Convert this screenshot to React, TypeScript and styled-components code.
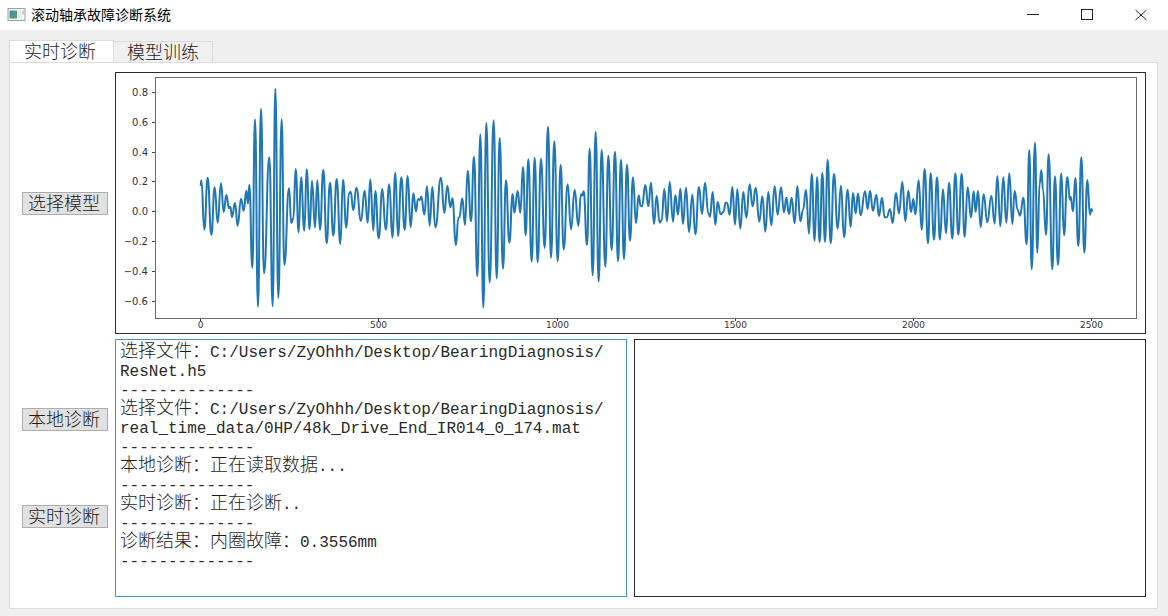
import React, { useState } from "react";
import styled, { createGlobalStyle } from "styled-components";

const GlobalStyle = createGlobalStyle`
  * { box-sizing: border-box; }
  body {
    margin: 0;
    background: #efefef;
    color: #1c1c1c;
    font-family: "Noto Sans CJK SC", sans-serif;
  }
`;

const Window = styled.div`
  display: flex;
  flex-direction: column;
  min-height: 100vh;
`;

const TitleBar = styled.header`
  display: flex;
  align-items: center;
  height: 30px;
  padding-left: 7px;
  background: #ffffff;
`;

const Title = styled.h1`
  flex: 1;
  margin: 0 0 0 5px;
  padding-bottom: 2px;
  font-size: 14px;
  line-height: 20px;
  font-weight: 400;
  color: #000000;
`;

const CaptionButton = styled.button`
  display: flex;
  align-items: center;
  justify-content: center;
  width: 54px;
  height: 30px;
  padding: 0;
  border: 0;
  background: transparent;
  color: #222222;
`;

const Main = styled.main`
  flex: 1;
  display: flex;
  flex-direction: column;
  padding: 10px 10px 7px 9px;
`;

const TabList = styled.div`
  display: flex;
  align-items: flex-end;
`;

const Tab = styled.button<{ $active: boolean }>`
  height: ${(p) => (p.$active ? 23 : 21)}px;
  margin-bottom: ${(p) => (p.$active ? -1 : 0)}px;
  padding: 0 ${(p) => (p.$active ? 17 : 13)}px ${(p) => (p.$active ? 4 : 3)}px ${(p) => (p.$active ? 14 : 13)}px;
  border: 1px solid #dcdcdc;
  border-left-width: ${(p) => (p.$active ? 1 : 0)}px;
  border-bottom: 0;
  background: ${(p) => (p.$active ? "#ffffff" : "#f0f0f0")};
  color: #1c1c1c;
  font-family: inherit;
  font-size: 18px;
  font-weight: 300;
  line-height: 18px;
`;

const Panel = styled.section`
  flex: 1;
  display: grid;
  grid-template-columns: 86px minmax(0, 1fr);
  grid-template-rows: minmax(0, 262fr) minmax(258px, 258fr);
  gap: 5px 7px;
  padding: 9px 11px 11px 12px;
  border: 1px solid #dcdcdc;
  background: #ffffff;
`;

const ButtonColumn = styled.div`
  display: flex;
  flex-direction: column;
  justify-content: center;
  gap: 74px;
`;

const ActionButton = styled.button`
  height: 23px;
  padding: 0 2px 3px 0;
  border: 1px solid #adadad;
  background: #e1e1e1;
  color: #1c1c1c;
  font-family: inherit;
  font-size: 18px;
  font-weight: 300;
  line-height: 18px;
`;

const ChartFrame = styled.figure`
  display: flex;
  min-height: 0;
  margin: 0;
  border: 1px solid #2b2b2b;
`;

const ChartSvg = styled.svg`
  display: block;
  width: 100%;
  height: 100%;
`;

const TickText = styled.text<{ $size: number }>`
  font-family: "DejaVu Sans", sans-serif;
  font-size: ${(p) => p.$size}px;
  fill: #333333;
`;

const OutputRow = styled.div`
  display: grid;
  grid-template-columns: minmax(0, 1fr) minmax(0, 1fr);
  gap: 7px;
`;

const OutputBox = styled.div<{ $focused?: boolean }>`
  padding: 4px;
  border: 1px solid ${(p) => (p.$focused ? "#3a96dd" : "#2b2b2b")};
  background: #ffffff;
`;

const LogLine = styled.p`
  margin: 0;
  height: 19px;
  color: #2a2a2a;
  font-family: "Liberation Mono", monospace;
  font-size: 16px;
  line-height: 19px;
  white-space: nowrap;
`;

const Han = styled.span`
  color: #1c1c1c;
  font-family: "Noto Sans CJK SC", sans-serif;
  font-size: 18px;
  font-weight: 300;
  line-height: 0;
`;

type Segment = { start: number; points: number[] };

/* Turning points of the vibration signal as x, y pairs, three units to a pixel. */
const SIGNAL: Segment[] = [
  {
    start: -15,
    points: [
      272, 345, 274, 331, 283, 479, 293, 323, 304, 495, 314, 352, 323, 458, 333, 340, 341, 426, 349, 375,
      357, 415, 361, 410, 366, 441, 375, 399, 383, 467, 393, 386, 401, 422, 409, 362, 414, 400, 418, 344,
      427, 594, 435, 148, 444, 710, 453, 116, 462, 610, 478, 262, 488, 709, 496, 56, 505, 684, 515, 148,
      523, 585, 537, 355, 544, 460, 550, 445, 557, 297, 566, 487, 573, 322, 583, 482, 590, 298, 599, 478,
      606, 332, 615, 473, 622, 331, 630, 480, 640, 299, 650, 520, 660, 338, 670, 497, 680, 327, 691, 522,
      699, 329, 709, 473, 717, 370, 722, 365, 730, 421, 739, 353, 753, 452, 764, 362, 773, 458,
    ],
  },
  {
    start: 735,
    points: [
      31, 328, 40, 482, 46, 363, 56, 505, 67, 357, 77, 479, 88, 343, 97, 503, 106, 308, 114, 498,
      124, 322, 134, 480, 143, 318, 152, 472, 160, 370, 168, 424, 174, 387, 180, 390, 184, 380, 193, 434,
      201, 349, 209, 467, 217, 351, 226, 472, 243, 323, 253, 429, 262, 347, 271, 412, 277, 385, 288, 525,
      295, 443, 298, 442, 307, 385, 315, 465, 323, 302, 333, 454, 342, 260, 352, 619, 361, 193, 370, 713,
      379, 159, 389, 638, 401, 151, 410, 625, 419, 204, 429, 596, 438, 331, 448, 518, 458, 372, 463, 428,
      473, 363, 481, 428, 489, 291, 497, 496, 505, 268, 515, 575, 524, 264, 533, 577, 543, 266, 554, 534,
      564, 170, 573, 563, 583, 214, 593, 574, 602, 284, 611, 538, 623, 343, 633, 478, 644, 360, 655, 467,
      663, 373, 667, 376, 671, 364, 681, 525, 689, 236, 698, 616, 707, 185, 716, 635, 725, 240, 736, 590,
      745, 257, 755, 540, 765, 245,
    ],
  },
  {
    start: 1485,
    points: [
      24, 574, 33, 269, 42, 567, 51, 284, 60, 513, 69, 322, 78, 459, 86, 376, 92, 408, 96, 409,
      106, 345, 115, 409, 123, 338, 132, 462, 140, 377, 149, 458, 155, 450, 163, 357, 171, 454, 179, 336,
      189, 455, 196, 375, 204, 434, 211, 356, 219, 462, 228, 353, 237, 486, 247, 374, 256, 493, 267, 351,
      276, 432, 285, 339, 295, 430, 300, 440, 308, 366, 316, 464, 323, 396, 332, 433, 341, 425, 347, 398,
      351, 398, 359, 434, 367, 351, 375, 464, 382, 358, 391, 476, 400, 366, 409, 443, 419, 343, 428, 409,
      437, 353, 448, 455, 457, 379, 466, 485, 475, 366, 484, 466, 494, 349, 503, 434, 513, 352, 522, 427,
      529, 383, 537, 432, 545, 383, 554, 460, 562, 349, 571, 454, 579, 420, 588, 360, 597, 491, 605, 311,
      614, 513, 621, 321, 629, 516, 637, 309, 645, 516, 653, 269, 662, 520, 672, 312, 683, 476, 693, 347,
      702, 502, 713, 359, 722, 471, 729, 369, 737, 430, 744, 370, 752, 436, 765, 364, 773, 417,
    ],
  },
  {
    start: 2235,
    points: [
      30, 363, 39, 422, 49, 375, 57, 438, 66, 383, 74, 442, 80, 442, 90, 418, 98, 459, 108, 369,
      117, 430, 127, 336, 136, 453, 145, 362, 153, 426, 160, 387, 166, 433, 176, 331, 185, 479, 194, 297,
      204, 520, 212, 310, 222, 509, 231, 322, 240, 509, 249, 358, 258, 490, 267, 338, 277, 506, 286, 310,
      295, 494, 305, 311, 314, 501, 323, 352, 333, 442, 341, 364, 347, 426, 354, 363, 362, 471, 371, 373,
      382, 457, 394, 377, 404, 461, 412, 318, 421, 469, 430, 322, 439, 458, 448, 310, 457, 462, 464, 363,
      473, 420, 480, 437, 490, 383, 500, 523, 508, 240, 515, 598, 525, 218, 532, 548, 539, 340, 544, 301,
      549, 360, 558, 495, 566, 253, 577, 598, 585, 319, 594, 585, 604, 310, 612, 496, 622, 321, 630, 390,
      632, 380, 639, 424, 646, 324, 655, 528, 664, 262, 673, 548, 682, 330, 690, 434, 694, 417, 697, 422,
    ],
  },
];

/* Joins the turning points by curves that are level at each of them. */
function signalPath(segments: Segment[]): string {
  const pts: [number, number][] = [];
  segments.forEach(({ start, points }) => {
    for (let i = 0; i < points.length; i += 2) pts.push([start + points[i], points[i + 1]]);
  });
  return pts
    .map(([x, y], i) => {
      if (i === 0) return `M${x} ${y}`;
      const [px, py] = pts[i - 1];
      const mid = (px + x) / 2;
      return `C${mid} ${py} ${mid} ${y} ${x} ${y}`;
    })
    .join("");
}

const Y_TICKS = [
  { label: "0.8", y: 19.5 },
  { label: "0.6", y: 49.5 },
  { label: "0.4", y: 79.5 },
  { label: "0.2", y: 108.5 },
  { label: "0.0", y: 138.5 },
  { label: "−0.2", y: 168.5 },
  { label: "−0.4", y: 198.5 },
  { label: "−0.6", y: 228.5 },
];

const X_TICKS = [
  { label: "0", x: 84.5 },
  { label: "500", x: 262.5 },
  { label: "1000", x: 441.5 },
  { label: "1500", x: 619.5 },
  { label: "2000", x: 797.5 },
  { label: "2500", x: 975.5 },
];

function SignalChart() {
  return (
    <ChartFrame>
      <ChartSvg viewBox="0 0 1029 260" role="img" aria-label="振动信号">
        <path
          d={signalPath(SIGNAL)}
          transform="translate(-1 -3) scale(0.33333)"
          fill="none"
          stroke="#1f77b4"
          strokeWidth="6"
          strokeLinejoin="round"
          strokeLinecap="round"
        />
        <rect x="39.5" y="4.5" width="981" height="241" fill="none" stroke="#6b6b6b" />
        {Y_TICKS.map((t) => (
          <g key={t.label}>
            <path d={`M36 ${t.y}H39`} stroke="#444444" />
            <TickText $size={10} x={32} y={t.y + 3} textAnchor="end">
              {t.label}
            </TickText>
          </g>
        ))}
        {X_TICKS.map((t) => (
          <g key={t.label}>
            <path d={`M${t.x} 246V248`} stroke="#333333" />
            <TickText $size={9} x={t.x} y={255} textAnchor="middle">
              {t.label}
            </TickText>
          </g>
        ))}
      </ChartSvg>
    </ChartFrame>
  );
}

function AppIcon() {
  return (
    <svg width="19" height="14" viewBox="0 0 19 14" aria-hidden="true">
      <defs>
        <linearGradient id="screen" x1="0" y1="0" x2="1" y2="1">
          <stop offset="0" stopColor="#4f86a8" />
          <stop offset="1" stopColor="#4fa284" />
        </linearGradient>
      </defs>
      <rect x="1" y="0.5" width="17" height="12" fill="#f4f6f7" stroke="#9aa0a6" />
      <rect x="2.5" y="2.5" width="7.5" height="8" fill="url(#screen)" />
      <rect x="11" y="2.5" width="3" height="8" fill="#e3e8ea" />
      <rect x="15" y="2.5" width="2" height="4" fill="#b9d6c4" />
    </svg>
  );
}

const LOG: { zh?: string; mono?: string }[] = [
  { zh: "选择文件：", mono: "C:/Users/ZyOhhh/Desktop/BearingDiagnosis/" },
  { mono: "ResNet.h5" },
  { mono: "--------------" },
  { zh: "选择文件：", mono: "C:/Users/ZyOhhh/Desktop/BearingDiagnosis/" },
  { mono: "real_time_data/0HP/48k_Drive_End_IR014_0_174.mat" },
  { mono: "--------------" },
  { zh: "本地诊断：正在读取数据", mono: "..." },
  { mono: "--------------" },
  { zh: "实时诊断：正在诊断", mono: ".." },
  { mono: "--------------" },
  { zh: "诊断结果：内圈故障：", mono: "0.3556mm" },
  { mono: "--------------" },
];

const TABS = ["实时诊断", "模型训练"];

export default function App() {
  const [tab, setTab] = useState(0);
  return (
    <Window>
      <GlobalStyle />
      <TitleBar>
        <AppIcon />
        <Title>滚动轴承故障诊断系统</Title>
        <CaptionButton aria-label="最小化">
          <svg width="12" height="12" viewBox="0 0 12 12">
            <path d="M0 5.5H12" stroke="currentColor" />
          </svg>
        </CaptionButton>
        <CaptionButton aria-label="最大化">
          <svg width="12" height="12" viewBox="0 0 12 12">
            <rect x="0.5" y="0.5" width="11" height="10" fill="none" stroke="currentColor" />
          </svg>
        </CaptionButton>
        <CaptionButton aria-label="关闭">
          <svg width="12" height="12" viewBox="0 0 12 12">
            <path d="M0.5 1L11.5 11M11.5 1L0.5 11" stroke="currentColor" />
          </svg>
        </CaptionButton>
      </TitleBar>
      <Main>
        <TabList role="tablist">
          {TABS.map((name, i) => (
            <Tab key={name} role="tab" aria-selected={tab === i} $active={tab === i} onClick={() => setTab(i)}>
              {name}
            </Tab>
          ))}
        </TabList>
        <Panel role="tabpanel">
          <ButtonColumn>
            <ActionButton>选择模型</ActionButton>
          </ButtonColumn>
          <SignalChart />
          <ButtonColumn>
            <ActionButton>本地诊断</ActionButton>
            <ActionButton>实时诊断</ActionButton>
          </ButtonColumn>
          <OutputRow>
            <OutputBox role="log" tabIndex={0} $focused>
              {LOG.map((line, i) => (
                <LogLine key={i}>
                  {line.zh && <Han>{line.zh}</Han>}
                  {line.mono}
                </LogLine>
              ))}
            </OutputBox>
            <OutputBox />
          </OutputRow>
        </Panel>
      </Main>
    </Window>
  );
}
